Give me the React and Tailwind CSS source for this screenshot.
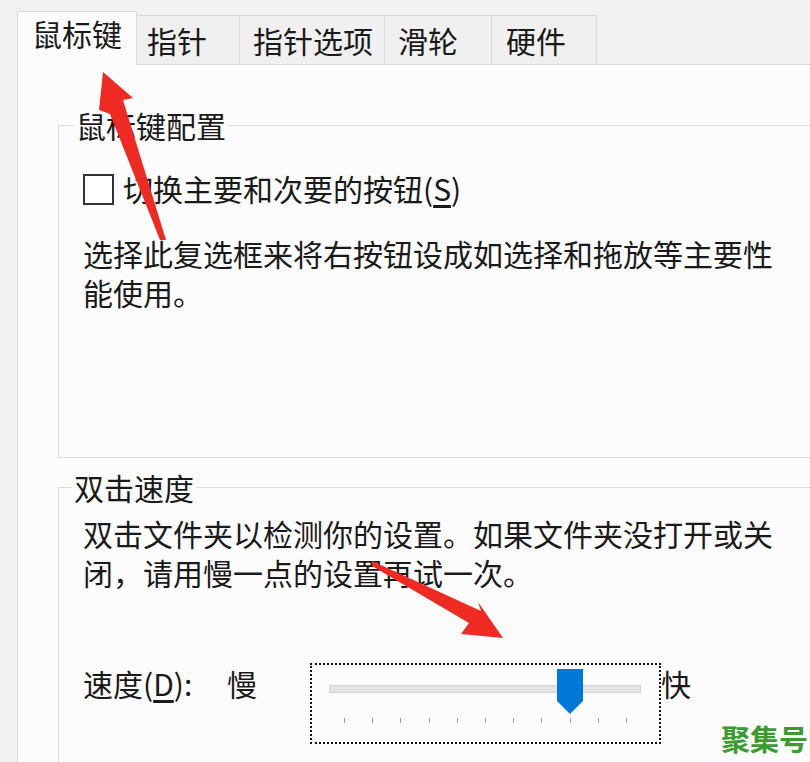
import React from 'react';

const tabs = [
  { label: '指针', w: 'w-[103px]', pl: 'pl-[10px]' },
  { label: '指针选项', w: 'w-[145px]', pl: 'pl-[13px]' },
  { label: '滑轮', w: 'w-[107px]', pl: 'pl-[13px]' },
  { label: '硬件', w: 'w-[105px]', pl: 'pl-[14px]' },
];

function SpeedSlider() {
  const ticks = Array.from({ length: 11 });
  return (
    <div className="relative w-[351px] h-[81px] border-2 border-dotted border-[#111]">
      <div className="ml-[17px] mt-[20px] w-[312px] h-[8px] bg-[#e4e4e4] border border-[#d4d4d4]" />
      <div className="ml-[32px] mt-[25px] w-[283px] flex justify-between">
        {ticks.map((_, i) => (
          <div key={i} className="w-px h-[5px] bg-[#9a9a9a]" />
        ))}
      </div>
      {/* thumb */}
      <svg className="absolute left-[245px] top-[4px]" width="26" height="46" viewBox="0 0 26 46">
        <polygon points="0,0 26,0 26,32 13,45 0,32" fill="#0078d7" />
      </svg>
    </div>
  );
}

export default function App() {
  return (
    <div
      className="relative w-[810px] h-[762px] overflow-hidden bg-[#f2f2f2] text-[#1a1a1a]"
      style={{ fontFamily: '"Noto Sans CJK SC", "Noto Sans", sans-serif' }}
    >
      {/* Tab strip */}
      <div className="flex items-end h-[64px] pl-[17px]">
        <div className="relative z-10 -mb-px w-[120px] h-[54px] pl-[14px] pt-[6px] bg-[#fcfcfc] border border-b-0 border-[#d9d9d9] text-[30px] leading-[30px]">
          鼠标键
        </div>
        {tabs.map((t) => (
          <div
            key={t.label}
            className={`${t.w} ${t.pl} h-[49px] pt-[9px] bg-[#f0f0f0] border border-l-0 border-b-0 border-[#d9d9d9] text-[30px] leading-[30px]`}
          >
            {t.label}
          </div>
        ))}
      </div>

      {/* Panel */}
      <div className="ml-[17px] h-[698px] border-l border-t border-[#d9d9d9] bg-[#fcfcfc] pl-[40px] pt-[45px]">
        <fieldset className="w-[800px] h-[348px] border border-[#dcdcdc]">
          <legend className="ml-[15px] px-[2px] text-[30px] leading-[30px]">鼠标键配置</legend>
          <div className="pl-[24px]">
            <div className="mt-[34px] flex items-center gap-[9px] text-[30px] leading-[30px]">
              <div className="w-[31px] h-[31px] border-2 border-[#333] bg-white" />
              <span className="-mt-[3px]">
                切换主要和次要的按钮(<u className="underline-offset-4">S</u>)
              </span>
            </div>
            <p className="mt-[29px] w-[700px] text-[30px] leading-[39px]">
              选择此复选框来将右按钮设成如选择和拖放等主要性能使用。
            </p>
          </div>
        </fieldset>

        <fieldset className="mt-[14px] w-[800px] h-[400px] border border-[#dcdcdc]">
          <legend className="ml-[13px] px-[2px] text-[30px] leading-[30px]">双击速度</legend>
          <div className="pl-[24px]">
            <p className="mt-[12px] w-[700px] text-[30px] leading-[39px]">
              双击文件夹以检测你的设置。如果文件夹没打开或关闭，请用慢一点的设置再试一次。
            </p>
            <div className="mt-[71px] flex items-start text-[30px] leading-[30px]">
              <span className="w-[144px] mt-[5px]">
                速度(<u className="underline-offset-4">D</u>):
              </span>
              <span className="w-[83px] mt-[5px]">慢</span>
              <SpeedSlider />
              <span className="mt-[5px]">快</span>
            </div>
          </div>
        </fieldset>
      </div>

      {/* Annotation arrows */}
      <svg className="absolute left-0 top-0 pointer-events-none" width="810" height="762" viewBox="0 0 810 762">
        <polygon points="103,72 133,98 123,100 166,240 160,240 110,114 99,110" fill="#ee2a22" />
        <polygon points="372,561 481,611 478,602 503,638 461,634 469,623 372,566" fill="#ee2a22" />
      </svg>

      {/* Watermark */}
      <div className="absolute right-[2px] bottom-[8px] text-[29px] leading-[32px] font-bold text-[#3b9a32]">
        聚集号
      </div>
    </div>
  );
}
